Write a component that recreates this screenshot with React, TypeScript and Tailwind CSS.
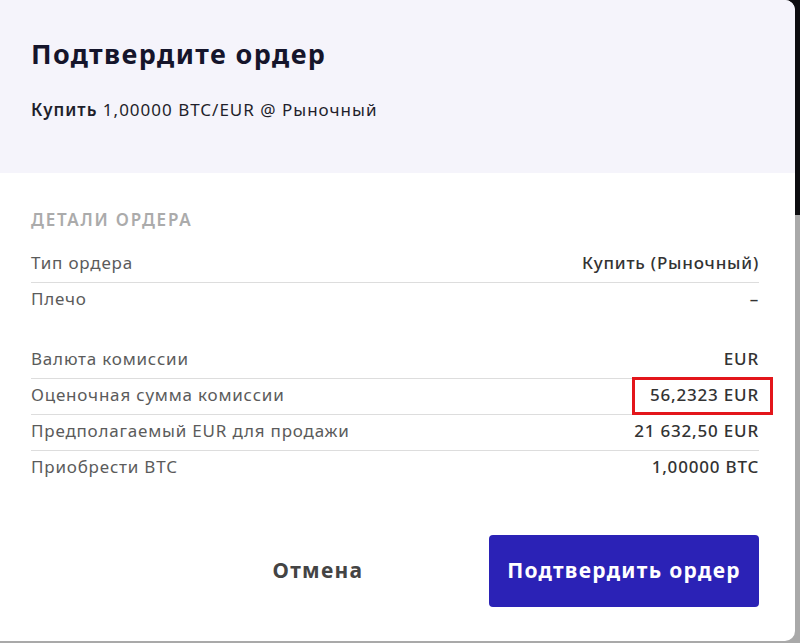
const rowsTop = [
  { label: 'Тип ордера', value: 'Купить (Рыночный)' },
  { label: 'Плечо', value: '–' },
]

const rowsBottom = [
  { label: 'Валюта комиссии', value: 'EUR' },
  { label: 'Оценочная сумма комиссии', value: '56,2323 EUR', marked: true },
  { label: 'Предполагаемый EUR для продажи', value: '21 632,50 EUR' },
  { label: 'Приобрести BTC', value: '1,00000 BTC' },
]

type Row = { label: string; value: string; marked?: boolean }

const DetailRows = ({ rows }: { rows: Row[] }) => (
  <div>
    {rows.map((row, i) => (
      <div
        key={row.label}
        className={`flex items-start justify-between h-[36px] pt-[4px] ${
          i < rows.length - 1 ? 'border-b border-[#dddddd]' : ''
        }`}
      >
        <span className="text-[17px] leading-6 tracking-[0.8px] text-[#5b5b5b]">{row.label}</span>
        <span className="relative text-[17px] leading-6 tracking-[0.8px] font-medium text-[#333333]">
          {row.value}
          {row.marked && (
            <span className="absolute -left-[18px] -right-[14px] -top-[6px] -bottom-[8px] border-[3px] border-[#e3161b]" />
          )}
        </span>
      </div>
    ))}
  </div>
)

export default function App() {
  return (
    <div
      className="relative w-[800px] h-[643px] overflow-hidden bg-[#a9a9a9]"
      style={{ fontFamily: '"Noto Sans", "Open Sans", sans-serif' }}
    >
      <div className="h-[215px] bg-[#0d0d10]" />

      {/* Dialog */}
      <div className="absolute left-0 top-0 w-[795px] h-[641px] bg-white rounded-r-[10px] overflow-hidden flex flex-col">
        <div className="h-[173px] bg-[#f5f4fb] pl-[31px] pt-[36px]">
          <h1 className="text-[27px] leading-[36px] tracking-[1.4px] font-bold text-[#15152b]">Подтвердите ордер</h1>
          <p className="mt-[26px] text-[17px] leading-6 tracking-[1px] text-[#1f1f2b]">
            <span className="font-semibold">Купить</span> 1,00000 BTC/EUR @ Рыночный
          </p>
        </div>

        <div className="pl-[31px] pr-[36px] pt-[35px]">
          <div className="text-[17px] leading-6 tracking-[1.8px] font-semibold uppercase text-[#ababab]">
            Детали ордера
          </div>
          <div className="mt-[15px]">
            <DetailRows rows={rowsTop} />
          </div>
          <div className="mt-[24px]">
            <DetailRows rows={rowsBottom} />
          </div>

          <div className="mt-[48px] flex items-center justify-end">
            <button className="w-[220px] h-[72px] text-[21px] tracking-[1.3px] font-bold text-[#444444]">Отмена</button>
            <button className="ml-[61px] w-[270px] h-[72px] rounded-[4px] bg-[#2b22b6] text-[21px] tracking-[1.3px] font-bold text-white">
              Подтвердить ордер
            </button>
          </div>
        </div>
      </div>
    </div>
  )
}
